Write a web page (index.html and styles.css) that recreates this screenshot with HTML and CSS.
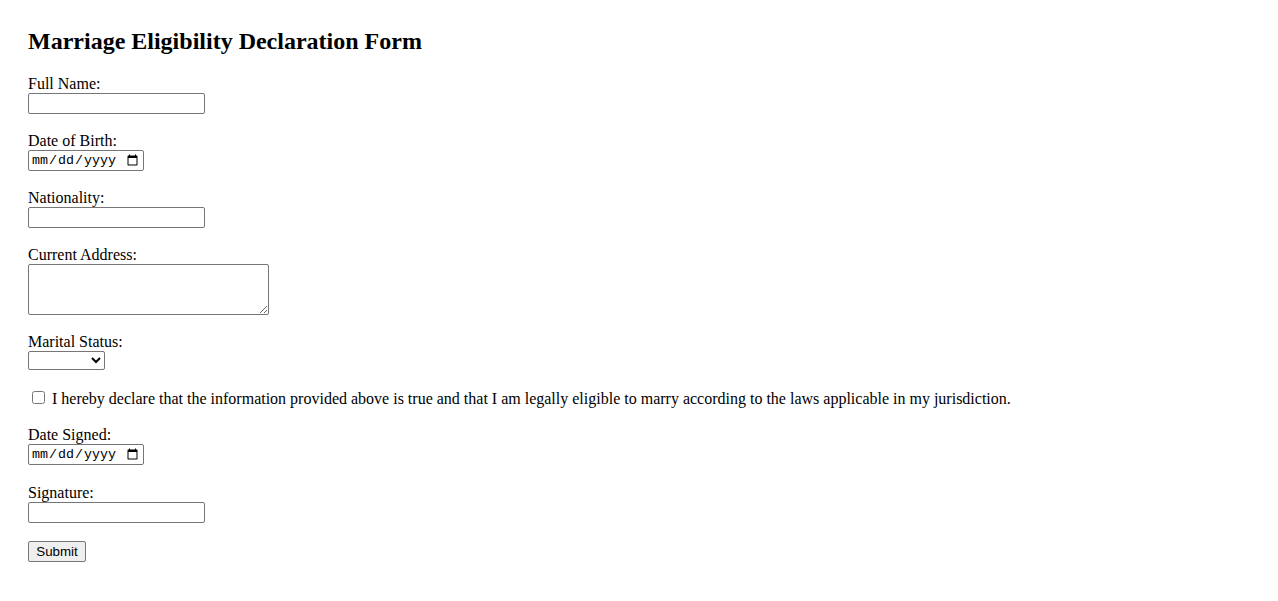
FILE: index.html
```html
<!DOCTYPE html>
<html lang="en">
<head>
<meta charset="utf-8">
<title>Marriage Eligibility Declaration Form</title>
<link rel="stylesheet" href="styles.css">
</head>
<body>
<main class="page">
  <h2 class="title">Marriage Eligibility Declaration Form</h2>
  <form class="form">
    <div class="field">
      <label class="label" for="fullName">Full Name:</label>
      <input class="text-input" type="text" id="fullName" name="fullName">
    </div>
    <div class="field">
      <label class="label" for="dob">Date of Birth:</label>
      <input class="date-input" type="date" id="dob" name="dob">
    </div>
    <div class="field">
      <label class="label" for="nationality">Nationality:</label>
      <input class="text-input" type="text" id="nationality" name="nationality">
    </div>
    <div class="field">
      <label class="label" for="address">Current Address:</label>
      <textarea class="textarea" id="address" name="address"></textarea>
    </div>
    <div class="field">
      <label class="label" for="maritalStatus">Marital Status:</label>
      <select class="select" id="maritalStatus" name="maritalStatus">
        <option value=""></option>
        <option value="single">Single</option>
        <option value="divorced">Divorced</option>
        <option value="widowed">Widowed</option>
      </select>
    </div>
    <div class="field check-row">
      <input class="checkbox" type="checkbox" id="declaration" name="declaration">
      <label class="check-label" for="declaration">I hereby declare that the information provided above is true and that I am legally eligible to marry according to the laws applicable in my jurisdiction.</label>
    </div>
    <div class="field field--loose">
      <label class="label" for="dateSigned">Date Signed:</label>
      <input class="date-input" type="date" id="dateSigned" name="dateSigned">
    </div>
    <div class="field">
      <label class="label" for="signature">Signature:</label>
      <input class="text-input" type="text" id="signature" name="signature">
    </div>
    <div class="field">
      <button class="submit" type="submit">Submit</button>
    </div>
  </form>
</main>
</body>
</html>
```
FILE: styles.css
```css
html, body {
  margin: 0;
  padding: 0;
  background: #ffffff;
}

body {
  font-family: "Liberation Serif", "Times New Roman", serif;
  font-size: 16px;
  color: #000000;
}

.page {
  padding: 28px;
}

.title {
  margin: 0 0 21px;
  font-size: 24px;
  line-height: 26px;
  font-weight: bold;
}

.form {
  margin: 0;
}

.field {
  margin-bottom: 18px;
}

.field--loose {
  margin-bottom: 19px;
}

.label {
  display: block;
  line-height: 18px;
}

.text-input {
  display: block;
  box-sizing: border-box;
  width: 177px;
  height: 21px;
  margin: 0;
  padding: 1px 2px;
  border: 1px solid #767676;
  border-radius: 2px;
  font-family: "Liberation Sans", Arial, sans-serif;
  font-size: 13.333px;
}

.date-input {
  display: block;
  box-sizing: border-box;
  width: 116px;
  height: 21px;
  margin: 0;
  padding: 1px 2px;
  border: 1px solid #767676;
  border-radius: 2px;
  font-family: "Liberation Mono", "DejaVu Sans Mono", monospace;
  font-size: 13.333px;
}

.textarea {
  display: block;
  box-sizing: border-box;
  width: 241px;
  height: 51px;
  margin: 0;
  padding: 2px;
  border: 1px solid #767676;
  border-radius: 2px;
  font-family: "Liberation Mono", "DejaVu Sans Mono", monospace;
  font-size: 13.333px;
}

.select {
  display: block;
  box-sizing: border-box;
  width: 77px;
  height: 19px;
  margin: 0;
  border: 1px solid #767676;
  border-radius: 2px;
  font-family: "Liberation Sans", Arial, sans-serif;
  font-size: 13.333px;
  background: #ffffff;
}

.check-row {
  display: flex;
  align-items: flex-start;
  box-sizing: border-box;
  height: 21px;
  padding-top: 1px;
  margin-bottom: 17px;
}

.checkbox {
  width: 13px;
  height: 13px;
  margin: 2px 3px 3px 4px;
  flex: none;
}

.check-label {
  margin-top: 1px;
  margin-left: 4px;
  line-height: 18px;
  white-space: nowrap;
}

.submit {
  box-sizing: border-box;
  width: 58px;
  height: 21px;
  margin: 0;
  padding: 1px 6px;
  border: 1px solid #767676;
  border-radius: 2px;
  background: #efefef;
  font-family: "Liberation Sans", Arial, sans-serif;
  font-size: 13.333px;
  color: #000000;
}
```
